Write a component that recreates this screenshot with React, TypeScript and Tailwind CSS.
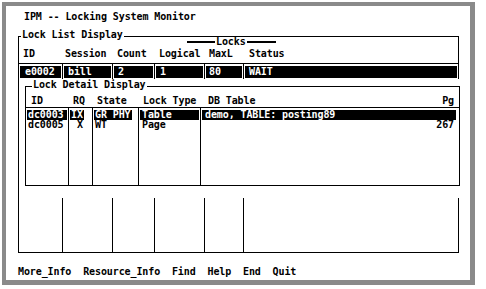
export default function App() {
  const font =
    "font-['DejaVu_Sans_Mono',monospace] font-bold text-[10px] leading-[10px] tracking-[-0.1px] text-black";
  return (
    <div className={`w-[486px] h-[289px] bg-white pt-[2px] pl-[2px] ${font}`}>
      <div className="w-[473px] h-[283px] border-[#8a8a8a] border-l-4 border-t-4 border-r-[5px] border-b-[5px] pt-[6px] pl-[12px]">
        <div className="ml-[6px] h-[10px] whitespace-pre">IPM -- Locking System Monitor</div>

        {/* Lock List group */}
        <div className="relative mt-[14px] w-[441px] border-t border-l border-r border-black">
          <span className="absolute left-[2px] -top-[7px] bg-white px-[1px] whitespace-pre">Lock List Display</span>

          <div className="h-[10px] flex items-center ml-[168px]">
            <div className="w-[28px] h-[2px] bg-black" />
            <span className="px-[1px]">Locks</span>
            <div className="w-[29px] h-[2px] bg-black" />
          </div>

          <div className="mt-[2px] h-[10px] flex whitespace-pre">
            <div className="w-[44px] pl-[4px]">ID</div>
            <div className="w-[50px] pl-[2px]">Session</div>
            <div className="w-[42px] pl-[4px]">Count</div>
            <div className="w-[50px] pl-[4px]">Logical</div>
            <div className="w-[39px] pl-[4px]">MaxL</div>
            <div className="flex-1 pl-[5px]">Status</div>
          </div>

          {/* List box */}
          <div className="mt-[4px] border-t border-b border-black flex flex-col">
            <div className="h-[15px] flex">
              <div className="w-[44px] border-r border-black pt-[2px] px-[1px]">
                <div className="h-[12px] bg-black text-white pt-[1px] pl-[5px]">e0002</div>
              </div>
              <div className="w-[50px] border-r border-black pt-[2px] px-[1px]">
                <div className="h-[12px] bg-black text-white pt-[1px] pl-[4px]">bill</div>
              </div>
              <div className="w-[42px] border-r border-black pt-[2px] px-[1px]">
                <div className="h-[12px] bg-black text-white pt-[1px] pl-[4px]">2</div>
              </div>
              <div className="w-[50px] border-r border-black pt-[2px] px-[1px]">
                <div className="h-[12px] bg-black text-white pt-[1px] pl-[4px]">1</div>
              </div>
              <div className="w-[39px] border-r border-black pt-[2px] px-[1px]">
                <div className="h-[12px] bg-black text-white pt-[1px] pl-[3px]">80</div>
              </div>
              <div className="flex-1 pt-[2px] px-[1px]">
                <div className="h-[12px] bg-black text-white pt-[1px] pl-[4px]">WAIT</div>
              </div>
            </div>

            {/* Lock Detail overlay */}
            <div className="relative h-[119px] pt-[7px] pl-[6px] mr-[-2px] bg-white">
              <div className="relative h-[100px] border border-black flex flex-col">
                <span className="absolute left-[6px] -top-[7px] bg-white px-[1px] whitespace-pre">Lock Detail Display</span>
                <div className="mt-[9px] h-[12px] border-b border-black flex whitespace-pre">
                  <div className="w-[43px] pl-[5px]">ID</div>
                  <div className="w-[24px] pl-[4px]">RQ</div>
                  <div className="w-[46px] pl-[4px]">State</div>
                  <div className="w-[62px] pl-[4px]">Lock Type</div>
                  <div className="flex-1 pl-[7px] flex justify-between pr-[5px]">
                    <span>DB Table</span>
                    <span>Pg</span>
                  </div>
                </div>
                <div className="flex-1 flex leading-[10px] whitespace-pre">
                  <div className="w-[43px] border-r border-black pt-[2px]">
                    <div className="h-[10px] mx-[1px] bg-black text-white pl-[1px]">dc0003</div>
                    <div className="h-[10px] pl-[2px]">dc0005</div>
                  </div>
                  <div className="w-[24px] border-r border-black pt-[2px]">
                    <div className="h-[10px]">
                      <span className="inline-block h-[10px] ml-[1px] px-[1px] bg-black text-white">IX</span>
                    </div>
                    <div className="h-[10px] pl-[2px]"> X</div>
                  </div>
                  <div className="w-[46px] border-r border-black pt-[2px]">
                    <div className="h-[10px]">
                      <span className="inline-block h-[10px] ml-[1px] px-[1px] bg-black text-white">GR PHY</span>
                    </div>
                    <div className="h-[10px] pl-[2px]">WT</div>
                  </div>
                  <div className="w-[62px] border-r border-black pt-[2px]">
                    <div className="h-[10px] mx-[1px] bg-black text-white pl-[2px]">Table</div>
                    <div className="h-[10px] pl-[3px]">Page</div>
                  </div>
                  <div className="flex-1 pt-[2px]">
                    <div className="h-[10px] ml-[1px] mr-[3px] bg-black text-white pl-[3px]">demo, TABLE: posting89</div>
                    <div className="h-[10px] text-right pr-[5px]">267</div>
                  </div>
                </div>
              </div>
            </div>

            <div className="h-[54px] flex">
              <div className="w-[44px] border-r border-black" />
              <div className="w-[50px] border-r border-black" />
              <div className="w-[42px] border-r border-black" />
              <div className="w-[50px] border-r border-black" />
              <div className="w-[39px] border-r border-black" />
              <div className="flex-1" />
            </div>
          </div>
        </div>

        <div className="mt-[14px] h-[10px] whitespace-pre">More_Info  Resource_Info  Find  Help  End  Quit</div>
      </div>
    </div>
  );
}
